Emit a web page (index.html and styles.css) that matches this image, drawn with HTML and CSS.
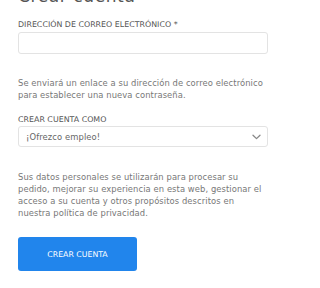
FILE: index.html
```html
<!DOCTYPE html>
<html lang="es">
<head>
<meta charset="utf-8">
<link rel="stylesheet" href="styles.css">
</head>
<body>
<main class="page">
  <h1 class="title">Crear cuenta</h1>
  <form class="form">
    <label class="label label-email">DIRECCIÓN DE CORREO ELECTRÓNICO *</label>
    <div class="input"></div>
    <p class="note note-first">Se enviará un enlace a su dirección de correo electrónico para establecer una nueva contraseña.</p>
    <label class="label label-role">CREAR CUENTA COMO</label>
    <div class="select">
      <span class="select-text">¡Ofrezco empleo!</span>
      <svg class="chevron" width="9" height="6" viewBox="0 0 9 6"><path d="M1 1.2 L4.5 4.6 L8 1.2" fill="none" stroke="#888" stroke-width="1.3" stroke-linecap="round" stroke-linejoin="round"/></svg>
    </div>
    <p class="note note-privacy">Sus datos personales se utilizarán para procesar su pedido, mejorar su experiencia en esta web, gestionar el acceso a su cuenta y otros propósitos descritos en nuestra política de privacidad.</p>
    <button type="button" class="button">CREAR CUENTA</button>
  </form>
</main>
</body>
</html>
```
FILE: styles.css
```css
html, body {
  margin: 0;
  padding: 0;
  background: #ffffff;
}
.page {
  padding: 0 20px 0 18px;
  font-family: "DejaVu Sans", "Open Sans", sans-serif;
  color: #666;
  overflow: hidden;
}
.title {
  margin: -15px 0 11px 0;
  font-size: 17px;
  line-height: 22px;
  height: 24px;
  font-weight: 400;
  color: #555;
  letter-spacing: 0.6px;
}
.form {
  display: flex;
  flex-direction: column;
  width: 250px;
}
.label {
  display: block;
  font-size: 7.9px;
  line-height: 10px;
  color: #555;
}
.label-email {
  margin-bottom: 2px;
}
.input {
  height: 20px;
  border: 1px solid #e3e3e3;
  border-radius: 3px;
  background: #fff;
}
.note {
  margin: 0;
  font-size: 8.4px;
  line-height: 12px;
  letter-spacing: 0.08px;
  color: #777;
}
.note-first {
  margin-top: 23px;
}
.label-role {
  margin-top: 14px;
  margin-bottom: 1px;
}
.select {
  height: 19px;
  border: 1px solid #e3e3e3;
  border-radius: 3px;
  display: flex;
  align-items: center;
  justify-content: space-between;
  padding: 0 6px 0 7px;
}
.select-text {
  font-size: 8.4px;
  letter-spacing: 0.1px;
  color: #666;
}
.chevron {
  display: block;
}
.note-privacy {
  margin-top: 24px;
}
.button {
  margin-top: 18px;
  width: 119px;
  height: 34px;
  border: none;
  border-radius: 3px;
  background: #2185ec;
  color: #fff;
  font-family: "DejaVu Sans", "Open Sans", sans-serif;
  font-size: 7.8px;
  padding: 0;
}
```
